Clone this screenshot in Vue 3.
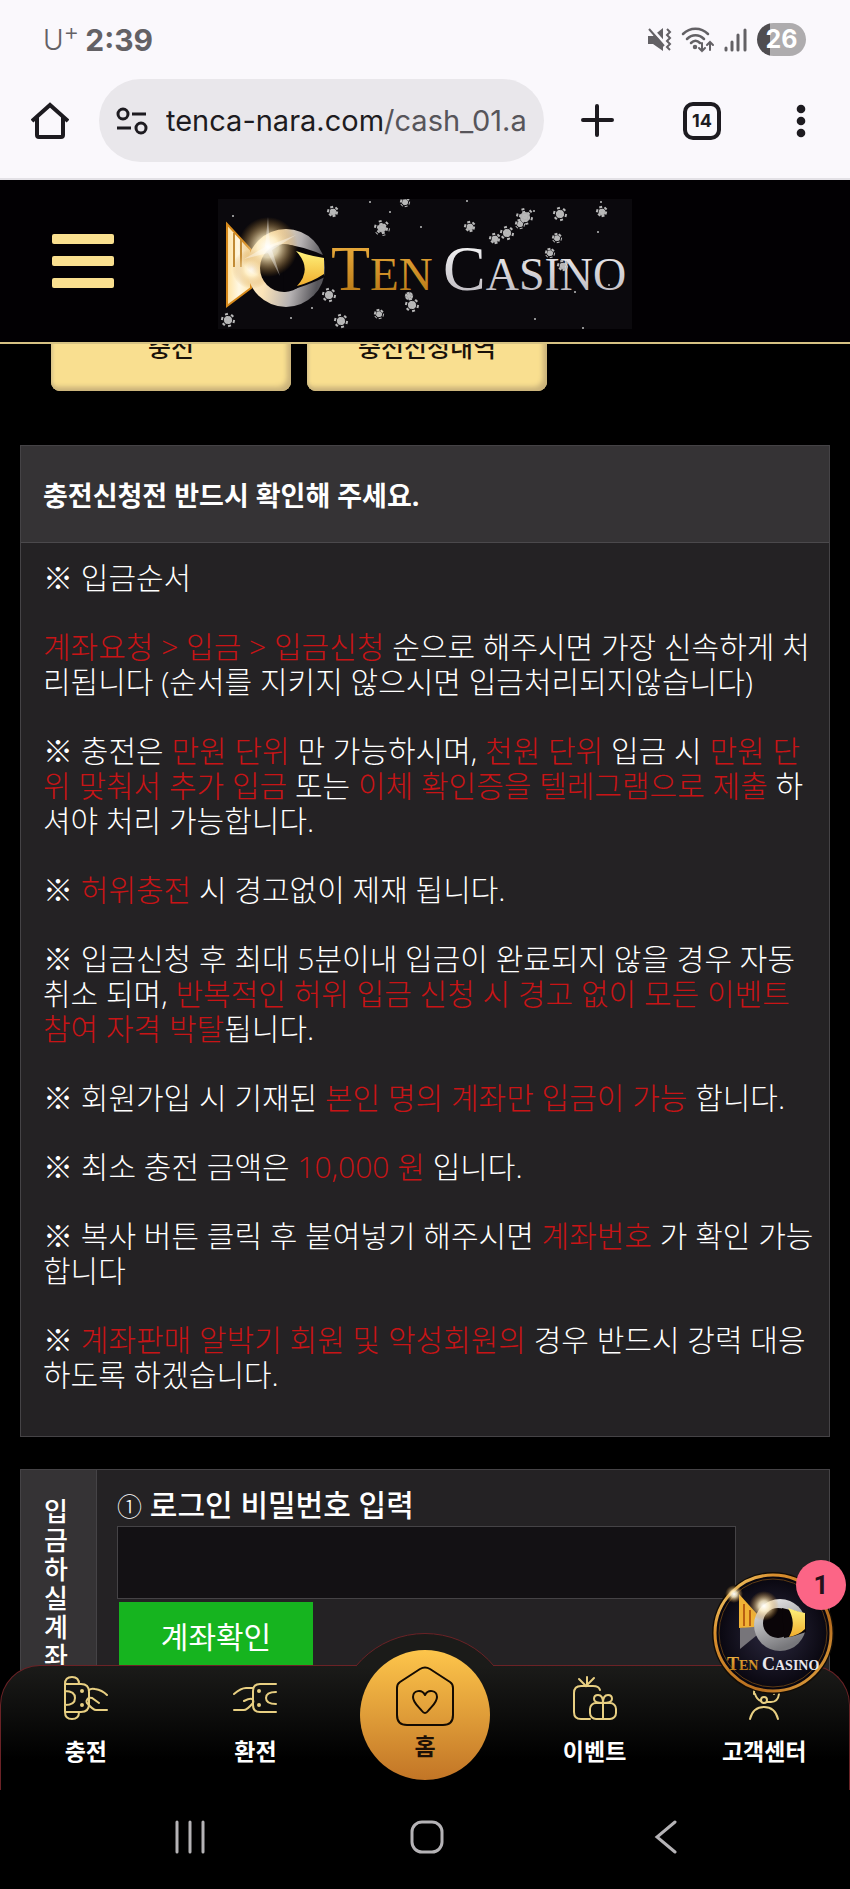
<template>
  <div class="phone">
    <div class="status-bar">
      <div class="carrier">U<sup>+</sup></div>
      <div class="clock">2:39</div>
      <div class="status-icons">
        <svg width="26" height="26" viewBox="0 0 26 26" fill="none">
          <path d="M1 9h5l10-8v23L6 17H1z" fill="#636165" />
          <path d="M3 0l17 19" stroke="#faf8fc" stroke-width="3" />
          <path d="M2 2l15 17" stroke="#636165" stroke-width="2" />
          <path d="M20 2l3 3-3 3 3 3-3 3 3 3-3 3 3 3" stroke="#636165" stroke-width="2" />
        </svg>
        <svg width="34" height="26" viewBox="0 0 34 26" fill="none" stroke="#636165" stroke-width="2.5" stroke-linecap="round">
          <path d="M2 7c7-7 18-7 25 0M6 12c5-5 12-5 17 0M10 16c3-3 6-3 9 0" />
          <circle cx="14" cy="20" r="1" fill="#636165" />
          <path d="M21 16v8m-3-3l3 3 3-3M29 23v-8m-3 3l3-3 3 3" stroke-width="2" />
        </svg>
        <svg width="24" height="26" viewBox="0 0 24 26" stroke="#636165" stroke-width="3" stroke-linecap="round">
          <path d="M3 21v2M9 15v8M15 8v15M22 3v20" />
        </svg>
        <div class="battery">26</div>
      </div>
    </div>

    <div class="browser-bar">
      <button class="bar-button" aria-label="home">
        <svg width="38" height="38" viewBox="0 0 38 38" fill="none" stroke="#1d1b20" stroke-width="4" stroke-linejoin="round">
          <path d="M1 19L19 3l18 16" stroke-linejoin="miter" />
          <path d="M6 15v18q0 2 2 2h22q2 0 2-2V15" />
        </svg>
      </button>
      <button class="omnibox">
        <svg width="32" height="28" viewBox="0 0 32 28" fill="none" stroke="#1d1b20" stroke-width="3">
          <circle cx="7" cy="7" r="5" />
          <path d="M16 7h14M1 21h14" />
          <circle cx="25" cy="21" r="5" />
        </svg>
        <span class="url">tenca-nara.com<span class="path">/cash_01.asp</span></span>
      </button>
      <div class="bar-actions">
        <button class="bar-button" aria-label="new tab">
          <svg width="33" height="33" viewBox="0 0 33 33" stroke="#1d1b20" stroke-width="4" stroke-linecap="round">
            <path d="M16 2v29M2 16h29" />
          </svg>
        </button>
        <button class="bar-button tab-count">14</button>
        <button class="bar-button" aria-label="menu">
          <svg width="22" height="34" viewBox="0 0 22 34" fill="#1d1b20">
            <circle cx="11" cy="5" r="4.3" />
            <circle cx="11" cy="17" r="4.3" />
            <circle cx="11" cy="29" r="4.3" />
          </svg>
        </button>
      </div>
    </div>

    <div class="page">
      <header class="site-header">
        <button class="hamburger" aria-label="menu">
          <span></span><span></span><span></span>
        </button>
        <a href="#" class="logo">
          <svg width="414" height="130" viewBox="0 0 414 130">
            <defs>
              <linearGradient id="goldText" x1="0" y1="0" x2="0" y2="1">
                <stop offset="0" stop-color="#f3b544" />
                <stop offset="1" stop-color="#b0700f" />
              </linearGradient>
              <linearGradient id="silverText" x1="0" y1="0" x2="0" y2="1">
                <stop offset="0" stop-color="#ffffff" />
                <stop offset="1" stop-color="#b5b1b8" />
              </linearGradient>
              <linearGradient id="ring" x1="0" y1="0" x2="1" y2="0.2">
                <stop offset="0" stop-color="#fff6dc" />
                <stop offset="0.35" stop-color="#fbe3b8" />
                <stop offset="0.7" stop-color="#b5b1b2" />
                <stop offset="1" stop-color="#56555a" />
              </linearGradient>
              <linearGradient id="tail" x1="0" y1="0" x2="1" y2="0">
                <stop offset="0" stop-color="#ffe2a0" />
                <stop offset="0.5" stop-color="#fff8e4" />
                <stop offset="1" stop-color="#ffe9b4" />
              </linearGradient>
              <radialGradient id="flare">
                <stop offset="0" stop-color="#fff" />
                <stop offset="0.35" stop-color="#fff0c8" stop-opacity="0.85" />
                <stop offset="1" stop-color="#c98520" stop-opacity="0" />
              </radialGradient>
              <linearGradient id="iris" x1="0" y1="0" x2="0" y2="1">
                <stop offset="0" stop-color="#fff27c" />
                <stop offset="1" stop-color="#f0ad2c" />
              </linearGradient>
            </defs>
            <rect width="414" height="130" fill="#0b090d" />
            <path d="M9 25l24 26v38L9 107z" fill="url(#tail)" stroke="#d78a1c" stroke-width="2" />
            <path d="M16 34v34M23 40v28" stroke="#c08a35" stroke-width="2" />
            <circle cx="68" cy="69" r="39" fill="url(#ring)" />
            <circle cx="34" cy="70" r="20" fill="url(#flare)" />
            <circle cx="66" cy="69" r="24" fill="#08060a" />
            <path d="M64 45q22 2 43 12l-1 3v16l1 2q-18 9-41 15z" fill="#08060a" />
            <path d="M78 52q14 5 28 7v16q-12 8-27 12 16-17-1-35z" fill="url(#iris)" />
            <circle cx="50" cy="48" r="30" fill="url(#flare)" />
            <path d="M50 18l2 28 26-10-24 15 8 26-12-23-24 6 21-12z" fill="#fff" opacity="0.4" />
            <text x="113" y="91" class="logo-text" fill="url(#goldText)"><tspan font-size="64">T</tspan><tspan font-size="47">EN</tspan></text>
            <text x="225" y="91" class="logo-text" fill="url(#silverText)"><tspan font-size="64">C</tspan><tspan font-size="46">ASINO</tspan></text>
            <g v-for="(f, i) in flakes" :key="'f' + i" :transform="`translate(${f[0]} ${f[1]})`">
              <circle :r="f[2] * 0.55" fill="#d9d9d9" opacity="0.8" />
              <g stroke="#b9b9b9" stroke-width="3" stroke-dasharray="2 1">
                <path v-for="a in [0, 60, 120]" :key="a" :d="`M${-f[2]} 0H${f[2]}`" :transform="`rotate(${a + 15})`" />
              </g>
            </g>
            <circle v-for="(d, i) in dots" :key="'d' + i" :cx="d[0]" :cy="d[1]" r="1" fill="#bdbdbd" />
          </svg>
        </a>
      </header>

      <main class="content">
        <div class="tabs">
          <button class="tab">충전</button>
          <button class="tab">충전신청내역</button>
        </div>

        <section class="notice">
          <h2>충전신청전 반드시 확인해 주세요.</h2>
          <div class="notice-body">
            <p v-for="(lines, i) in notices" :key="i">
              <span v-for="(line, j) in lines" :key="j" class="line">
                <span v-for="(part, k) in line" :key="k" :class="{ red: part.red }">{{ part.text }}</span>
              </span>
            </p>
          </div>
        </section>

        <table class="form-table">
          <tbody>
            <tr>
              <th scope="row"><div class="vertical">입금하실계좌</div></th>
              <td>
                <label for="login-pw"><span class="num">①</span> 로그인 비밀번호 입력</label>
                <input id="login-pw" v-model="password" type="password" />
                <button class="check">계좌확인</button>
              </td>
            </tr>
          </tbody>
        </table>
      </main>

      <nav class="bottom-nav">
        <div class="bump"><div class="bump-circle"></div></div>
        <a href="#" class="nav-item">
          <svg width="44" height="44" viewBox="0 0 44 44" class="line-icon">
            <path d="M1 8v28M1 8q0-7 7-7t7 7M1 8h16q8 0 8 8v12q0 8-8 8H1M1 36q0 7 7 7t7-7M1 15q10 0 10 7t-10 7" />
            <path d="M25 14q2-2 6-1 7 1 12 6M43 34H32q-3 0-9-7-1-2 0-3 1-3 5-2l7 5" />
            <g class="solid"><circle cx="18" cy="15" r="1" /><circle cx="18" cy="29" r="1" /></g>
          </svg>
          <span>충전</span>
        </a>
        <a href="#" class="nav-item">
          <svg width="44" height="44" viewBox="0 0 44 44" class="line-icon">
            <path d="M43 8H27q-7 0-7 7v14q0 7 7 7h16M43 16q-10 0-10 6t10 6" />
            <path d="M1 18q7-6 12-6h7M1 34h10q3 0 9-7 1-3-1-4-2-1-8 2" />
            <g class="solid"><circle cx="26" cy="15" r="1" /><circle cx="26" cy="29" r="1" /></g>
          </svg>
          <span>환전</span>
        </a>
        <a href="#" class="nav-home">
          <svg width="60" height="60" viewBox="0 0 60 60" fill="none" stroke="#140b02" stroke-width="2" stroke-linejoin="round">
            <path d="M2 22q0-4 3-6L25 3q5-3 10 0l20 13q3 2 3 6v27q0 10-10 10H12Q2 59 2 49z" />
            <path d="M30 29c-3-6-12-5-12 2 0 6 6 10 9 14q3 4 6 0c3-4 9-8 9-14 0-7-9-8-12-2z" />
          </svg>
          <span>홈</span>
        </a>
        <a href="#" class="nav-item">
          <svg width="44" height="44" viewBox="0 0 44 44" class="line-icon">
            <path d="M14 1v9M6 3l7 7 8-8M17 43H8q-7 0-7-7V17q0-7 7-7h12q6 0 7 4" />
            <rect x="17" y="27" width="26" height="16" rx="6" />
            <path d="M30 27v16M30 27q-9 0-9-4 0-4 4-4 5 0 5 8 0-8 5-8 4 0 4 4 0 4-9 4" />
          </svg>
          <span>이벤트</span>
        </a>
        <a href="#" class="nav-item">
          <svg width="44" height="44" viewBox="0 0 44 44" class="line-icon">
            <path d="M12 18q0-13 10-13t10 13M13 18q2 6 6 7M37 18q-1 8-8 8h-4M8 43q3-12 14-12t14 12" />
            <circle cx="22" cy="24" r="3" />
          </svg>
          <span>고객센터</span>
        </a>
      </nav>

      <button class="chat" aria-label="chat">
        <svg width="122" height="122" viewBox="0 0 122 122">
          <defs>
            <linearGradient id="rim" x1="0" y1="0" x2="1" y2="1">
              <stop offset="0" stop-color="#ffe98a" />
              <stop offset="0.25" stop-color="#d98f2e" />
              <stop offset="0.7" stop-color="#b56c1e" />
              <stop offset="1" stop-color="#f0b54c" />
            </linearGradient>
            <radialGradient id="night">
              <stop offset="0" stop-color="#2c2940" />
              <stop offset="1" stop-color="#07050d" />
            </radialGradient>
            <linearGradient id="steel" x1="0" y1="0" x2="0.4" y2="1">
              <stop offset="0" stop-color="#f3f3f3" />
              <stop offset="1" stop-color="#77777b" />
            </linearGradient>
          </defs>
          <circle cx="61" cy="61" r="61" fill="#120c06" />
          <circle cx="61" cy="61" r="58" fill="url(#night)" stroke="url(#rim)" stroke-width="3" />
          <circle cx="61" cy="61" r="54" fill="none" stroke="#5d3b15" stroke-width="1" />
          <path d="M28 56l14-3 8 6-22 18z" fill="#77757a" />
          <path d="M27 22l18 20-3 13-15 1z" fill="#f0b235" />
          <path d="M32 32v22M38 38v16" stroke="#b85f12" stroke-width="2" />
          <circle cx="68" cy="53" r="26" fill="url(#steel)" />
          <circle cx="66" cy="51" r="15" fill="#0a0508" />
          <path d="M70 36q10 2 24 6v18q-10 4-22 6z" fill="#0a0508" />
          <path d="M76 36q10 4 17 5v16q-6 6-16 8 8-14-1-29z" fill="url(#iris)" />
          <circle cx="52" cy="34" r="15" fill="url(#flare)" />
          <circle cx="22" cy="22" r="9" fill="url(#flare)" />
          <text x="15" y="98" class="logo-text bold" fill="url(#goldText)"><tspan font-size="18">T</tspan><tspan font-size="14">EN</tspan></text>
          <text x="50" y="98" class="logo-text bold" fill="#e9e7ee"><tspan font-size="18">C</tspan><tspan font-size="14">ASINO</tspan></text>
        </svg>
        <span class="badge">1</span>
      </button>
    </div>

    <div class="system-nav">
      <button aria-label="recents">
        <svg width="30" height="34" viewBox="0 0 30 34"><path d="M2 2v30M15 2v30M28 2v30" /></svg>
      </button>
      <button aria-label="home">
        <svg width="34" height="34" viewBox="0 0 34 34"><rect x="2" y="2" width="30" height="30" rx="10" /></svg>
      </button>
      <button aria-label="back">
        <svg width="28" height="34" viewBox="0 0 28 34"><path d="M26 2L8 17l18 15" /></svg>
      </button>
    </div>
  </div>
</template>

<script setup>
import { ref } from 'vue'

const password = ref('')

const w = (text) => ({ text, red: false })
const r = (text) => ({ text, red: true })

// each notice is a list of lines, each line a list of coloured parts
const notices = [
  [[w('※ 입금순서')]],
  [
    [r('계좌요청 > 입금 > 입금신청'), w(' 순으로 해주시면 가장 신속하게 처')],
    [w('리됩니다 (순서를 지키지 않으시면 입금처리되지않습니다)')]
  ],
  [
    [w('※ 충전은 '), r('만원 단위'), w(' 만 가능하시며, '), r('천원 단위'), w(' 입금 시 '), r('만원 단')],
    [r('위 맞춰서 추가 입금'), w(' 또는 '), r('이체 확인증을 텔레그램으로 제출'), w(' 하')],
    [w('셔야 처리 가능합니다.')]
  ],
  [[w('※ '), r('허위충전'), w(' 시 경고없이 제재 됩니다.')]],
  [
    [w('※ 입금신청 후 최대 5분이내 입금이 완료되지 않을 경우 자동')],
    [w('취소 되며, '), r('반복적인 허위 입금 신청 시 경고 없이 모든 이벤트')],
    [r('참여 자격 박탈'), w('됩니다.')]
  ],
  [[w('※ 회원가입 시 기재된 '), r('본인 명의 계좌만 입금이 가능'), w(' 합니다.')]],
  [[w('※ 최소 충전 금액은 '), r('10,000 원'), w(' 입니다.')]],
  [
    [w('※ 복사 버튼 클릭 후 붙여넣기 해주시면 '), r('계좌번호'), w(' 가 확인 가능')],
    [w('합니다')]
  ],
  [
    [w('※ '), r('계좌판매 알박기 회원 및 악성회원의'), w(' 경우 반드시 강력 대응')],
    [w('하도록 하겠습니다.')]
  ]
]

// snow on the logo: x, y, radius
const flakes = [
  [115, 13, 6], [164, 29, 8], [187, 3, 5], [111, 96, 7], [123, 122, 7],
  [10, 121, 7], [161, 115, 5], [194, 106, 7], [191, 97, 4], [252, 28, 6],
  [307, 18, 9], [302, 25, 5], [289, 34, 7], [277, 40, 6], [342, 15, 7],
  [384, 13, 6], [339, 39, 5], [332, 54, 5], [345, 67, 6]
]
const dots = [
  [15, 17], [73, 119], [94, 109], [172, 13], [203, 28], [152, 3], [249, 2], [316, 12],
  [383, 3], [380, 33], [357, 93], [391, 86], [317, 120], [365, 129], [306, 63]
]
</script>

<style>
body {
  margin: 0;
  background: #000;
}
</style>

<style scoped>
.phone {
  display: flex;
  flex-direction: column;
  height: 100vh;
  font-family: "Open Sans", "Noto Sans CJK KR", sans-serif;
  color: #fff;
}

button {
  border: 0;
  padding: 0;
  background: none;
  font-family: inherit;
  color: inherit;
  cursor: pointer;
}

a {
  color: inherit;
  text-decoration: none;
}

svg {
  display: block;
}

/* status bar */
.status-bar {
  display: flex;
  align-items: center;
  height: 79px;
  box-sizing: border-box;
  padding: 0 44px 0 43px;
  background: #faf8fc;
  color: #636165;
  font-family: Inter, sans-serif;
}

.carrier {
  font-size: 28px;
  font-weight: 300;
  line-height: 30px;
}

.carrier sup {
  font-size: 24px;
  line-height: 0;
}

.clock {
  margin-left: 6px;
  font-size: 30px;
  font-weight: 700;
}

.status-icons {
  display: flex;
  align-items: center;
  gap: 8px;
  margin-left: auto;
}

.battery {
  width: 49px;
  margin-left: 2px;
  border-radius: 17px;
  background: linear-gradient(90deg, #4f4d50 26%, #aeacae 26%);
  color: #fff;
  font-size: 25px;
  font-weight: 700;
  line-height: 33px;
  text-align: center;
}

/* browser bar */
.browser-bar {
  display: flex;
  align-items: center;
  padding: 0 38px 16px 31px;
  border-bottom: 2px solid #e3e1e6;
  background: #faf8fc;
  color: #1d1b20;
}

.omnibox {
  display: flex;
  flex: 1;
  align-items: center;
  gap: 18px;
  min-width: 0;
  height: 83px;
  margin: 0 37px 0 30px;
  padding: 0 16px 0 17px;
  border-radius: 42px;
  background: #e9e7eb;
}

.omnibox svg {
  flex: none;
}

.url {
  overflow: hidden;
  font-family: Inter, sans-serif;
  font-size: 29px;
  line-height: 40px;
  white-space: nowrap;
}

.path {
  color: #57555a;
}

.bar-actions {
  display: flex;
  align-items: center;
  gap: 69px;
}

.tab-count {
  width: 38px;
  height: 38px;
  border: 4px solid #1d1b20;
  border-radius: 10px;
  font-family: Inter, sans-serif;
  font-size: 18px;
  font-weight: 700;
}

/* page */
.page {
  position: relative;
  flex: 1;
  min-height: 0;
  overflow: hidden;
  background: #000;
}

.site-header {
  position: relative;
  z-index: 2;
  display: flex;
  align-items: center;
  justify-content: center;
  padding: 19px 0 13px;
  border-bottom: 2px solid #d6c283;
  background: #020003;
}

.hamburger {
  position: absolute;
  top: 54px;
  left: 52px;
  display: flex;
  flex-direction: column;
  gap: 12px;
}

.hamburger span {
  width: 62px;
  height: 10px;
  border-radius: 2px;
  background: #f9df8f;
}

.logo-text {
  font-family: "Liberation Serif", serif;
}

.logo-text.bold {
  font-weight: 700;
}

.content {
  margin-top: -39px;
  padding: 0 20px;
}

.tabs {
  display: flex;
  gap: 16px;
  padding: 0 31px;
}

.tab {
  width: 240px;
  height: 86px;
  padding-bottom: 4px;
  border-radius: 9px;
  background: #f9df90;
  box-shadow: inset -4px -4px 5px #c9b27a, inset 2px 0 3px #d8c48a;
  color: #1a120a;
  font-size: 25px;
  font-weight: 500;
}

.notice {
  margin-top: 54px;
  border: 1px solid #454346;
  background: #242224;
}

.notice h2 {
  margin: 0;
  padding: 30px 22px 26px;
  border-bottom: 1px solid #4b494c;
  background: #353335;
  font-size: 27px;
  font-weight: 700;
  line-height: 40px;
}

.notice-body {
  display: flex;
  flex-direction: column;
  gap: 34px;
  padding: 17px 0 44px 22px;
  font-size: 30px;
  font-weight: 300;
  line-height: 35px;
}

.notice-body p {
  margin: 0;
}

.line {
  display: block;
  white-space: pre;
}

.red {
  color: #c81416;
}

.form-table {
  width: 100%;
  margin-top: 32px;
  border-collapse: collapse;
  background: #242224;
}

.form-table th,
.form-table td {
  border: 1px solid #454346;
  vertical-align: top;
}

.form-table th {
  width: 75px;
  padding: 27px 0;
  background: #353335;
}

.vertical {
  width: 26px;
  margin: 0 auto 0 22px;
  font-size: 26px;
  font-weight: 500;
  line-height: 29px;
  word-break: break-all;
}

.form-table td {
  padding: 15px 46px 40px 20px;
  text-align: left;
}

.form-table label {
  display: block;
  font-size: 30px;
  font-weight: 500;
  line-height: 40px;
}

.num {
  font-size: 25px;
  font-weight: 300;
}

.form-table input {
  display: block;
  box-sizing: border-box;
  width: 93%;
  height: 73px;
  border: 1px solid #454346;
  background: #131114;
  color: #fff;
  font-size: 30px;
}

.check {
  display: block;
  width: 194px;
  height: 72px;
  margin: 3px 2px;
  padding-bottom: 7px;
  background: #16b41f;
  font-size: 30px;
}

/* bottom nav */
.bottom-nav {
  position: absolute;
  right: 0;
  bottom: 0;
  left: 0;
  display: grid;
  grid-template-columns: repeat(5, 1fr);
  height: 125px;
  box-sizing: border-box;
  border: 1px solid #6b2226;
  border-bottom: 0;
  border-radius: 40px 40px 0 0;
  background: linear-gradient(#1b1b19, #000 75%);
}

.bump {
  position: absolute;
  top: -33px;
  left: 50%;
  width: 138px;
  height: 34px;
  margin-left: -69px;
  overflow: hidden;
}

.bump-circle {
  width: 180px;
  height: 180px;
  box-sizing: border-box;
  margin-left: -21px;
  border: 1px solid #6b2226;
  border-radius: 50%;
  background: #1b1b19;
}

.nav-item {
  display: flex;
  flex-direction: column;
  align-items: center;
  gap: 17px;
  padding-top: 10px;
  font-size: 23px;
  font-weight: 700;
  line-height: 28px;
}

.line-icon {
  fill: none;
  stroke: #e8cf82;
  stroke-width: 2;
  stroke-linecap: round;
}

.solid {
  fill: #e8cf82;
}

.nav-home {
  position: relative;
  display: flex;
  flex-direction: column;
  align-items: center;
  justify-self: center;
  width: 130px;
  height: 130px;
  margin-top: -16px;
  box-sizing: border-box;
  padding-top: 16px;
  border-radius: 50%;
  background: linear-gradient(#fdc54b, #c27526);
  color: #1c1006;
  font-size: 23px;
  font-weight: 700;
  line-height: 28px;
}

.nav-home span {
  margin-top: 6px;
}

/* chat bubble */
.chat {
  position: absolute;
  right: 16px;
  bottom: 96px;
  border-radius: 50%;
}

.badge {
  position: absolute;
  top: -12px;
  right: -12px;
  width: 50px;
  border-radius: 50%;
  background: #fc6586;
  color: #26101a;
  font-family: Roboto, sans-serif;
  font-size: 26px;
  font-weight: 700;
  line-height: 50px;
}

/* system nav */
.system-nav {
  display: flex;
  align-items: flex-start;
  justify-content: space-between;
  height: 99px;
  box-sizing: border-box;
  padding: 30px 173px 0 175px;
  background: #000;
}

.system-nav svg {
  fill: none;
  stroke: #b5b3b6;
  stroke-width: 3;
  stroke-linecap: round;
}
</style>
